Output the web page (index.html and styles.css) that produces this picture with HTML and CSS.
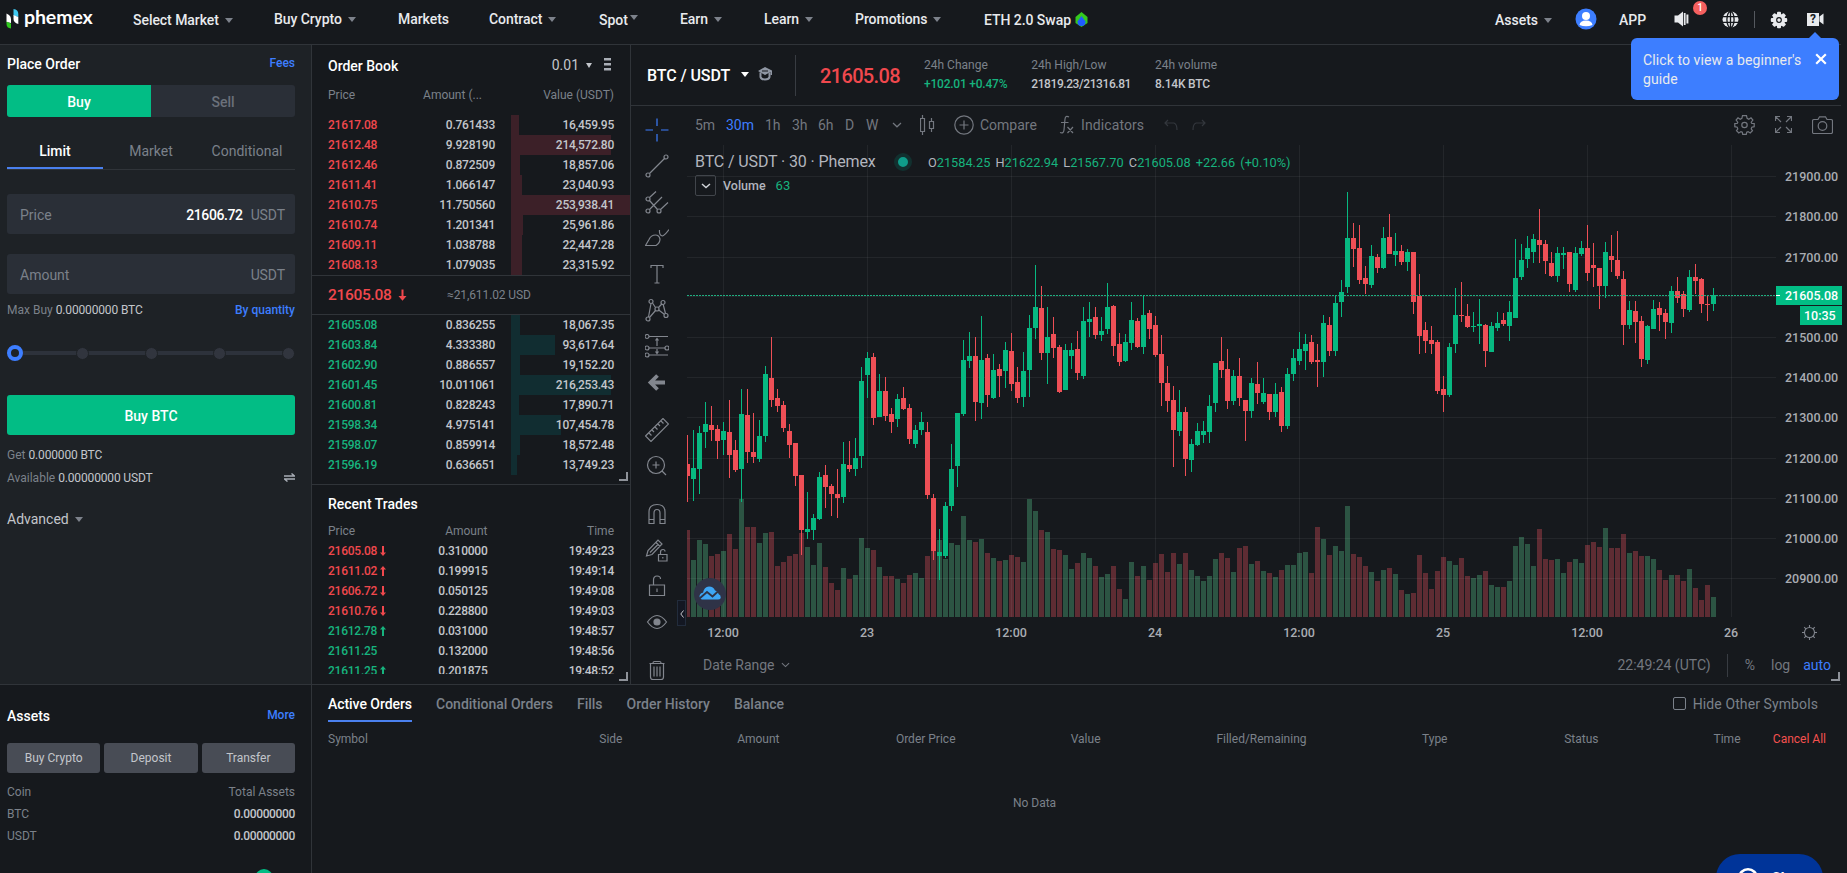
FILE: index.html
```html
<!DOCTYPE html>
<html lang="en">
<head>
    <meta charset="UTF-8">
    <meta name="viewport" content="width=device-width, initial-scale=1.0">
    <title>BTC / USDT | Phemex</title>
    <link rel="stylesheet" href="styles.css">
</head>
<body>
    <header class="topbar">
        <a class="logo">
            <svg width="14" height="22" viewBox="0 0 14 22">
                <path d="M0.5 5.5 L3 7 Q5 8.5 5 11 V15 L0.5 14Z" fill="#fff"/>
                <path d="M0.5 13.5 L5 15.5 V20.5 Q0.5 20 0.5 16Z" fill="#2fc71e"/>
                <path d="M7.5 1 Q12.3 1.5 12.3 6 V9 L7.5 7.5Z" fill="#3fc8f0"/>
                <path d="M7.5 7 L12.3 9 V16 Q7.5 14.5 7.5 11Z" fill="#fff"/>
            </svg>
            <span>phemex</span>
        </a>
        <nav class="nav">
            <a class="low">Select Market<i class="caret"></i></a>
            <a>Buy Crypto<i class="caret"></i></a>
            <a>Markets</a>
            <a>Contract<i class="caret"></i></a>
            <a class="low">Spot<i class="caret raised"></i></a>
            <a>Earn<i class="caret"></i></a>
            <a>Learn<i class="caret"></i></a>
            <a>Promotions<i class="caret"></i></a>
            <a class="low">ETH 2.0 Swap
                <svg width="13" height="15" viewBox="0 0 13 15"><path d="M6.5 0 L12.5 5 V11 L6.5 15 L0.5 11 V5Z" fill="#35c91e"/><path d="M6.5 4 L10.5 9.5 Q10.5 14 6.5 14 Q2.5 14 2.5 9.5Z" fill="#1f5bff"/></svg>
            </a>
        </nav>
        <div class="tools">
            <a class="low">Assets<i class="caret"></i></a>
            <svg class="avatar" width="22" height="22" viewBox="0 0 22 22"><circle cx="11" cy="11" r="10.5" fill="#3d7eff"/><circle cx="11" cy="8" r="4" fill="#fff"/><path d="M4.5 17 Q5 12.5 11 12.5 Q17 12.5 17.5 17 Q11 19.5 4.5 17Z" fill="#fff"/></svg>
            <a class="app-link low">APP</a>
            <span class="speaker">
                <svg width="15" height="18" viewBox="0 0 15 18" fill="#e8eaed"><path d="M0.5 5.5 H4 L9 1.5 V16.5 L4 12.5 H0.5Z"/><path d="M9.8 3 H11.6 V15 H9.8Z M12.4 4.5 H14.4 V13.5 H12.4Z"/></svg>
                <b class="badge">1</b>
            </span>
            <svg class="globe" width="17" height="17" viewBox="0 0 17 17"><circle cx="8.5" cy="8.5" r="8" fill="#e8eaed"/><g fill="none" stroke="#16191d" stroke-width="1.3"><ellipse cx="8.5" cy="8.5" rx="3.6" ry="8"/><path d="M8.5 0 V17 M0 5.7 H17 M0 11.3 H17"/></g></svg>
            <span class="sep"></span>
            <svg class="gear" width="18" height="18" viewBox="-9 -9 18 18"><g fill="#e8eaed"><circle r="6.3"/><rect x="-2" y="-8.2" width="4" height="16.4" rx="1"/><rect x="-2" y="-8.2" width="4" height="16.4" rx="1" transform="rotate(45)"/><rect x="-2" y="-8.2" width="4" height="16.4" rx="1" transform="rotate(90)"/><rect x="-2" y="-8.2" width="4" height="16.4" rx="1" transform="rotate(135)"/></g><circle r="2.3" fill="#e8eaed" stroke="#16191d" stroke-width="1.2"/></svg>
            <span class="guide"><b>?</b><svg width="5" height="12" viewBox="0 0 5 12"><path d="M0.5 3.5 L4.5 0.5 V11.5 L0.5 8.5Z" fill="#e8eaed"/></svg></span>
        </div>
        <div class="tip">
            <p>Click to view a beginner's guide</p>
            <svg width="12" height="12" viewBox="0 0 12 12"><path d="M1.2 1.2 L10.8 10.8 M10.8 1.2 L1.2 10.8" stroke="#fff" stroke-width="2.2"/></svg>
        </div>
    </header>

    <main class="layout">
        <section class="order-form">
            <div class="form-head"><h2>Place Order</h2><a class="link">Fees</a></div>
            <div class="side-switch"><button class="active">Buy</button><button>Sell</button></div>
            <div class="type-tabs"><a class="active">Limit</a><a>Market</a><a>Conditional</a></div>
            <div class="field"><span>Price</span><b>21606.72</b><em>USDT</em></div>
            <div class="field"><span>Amount</span><em>USDT</em></div>
            <div class="line max-buy"><span>Max Buy <b>0.00000000 BTC</b></span><a class="link">By quantity</a></div>
            <div class="slider"><i class="handle"></i><i></i><i></i><i></i><i></i></div>
            <button class="submit">Buy BTC</button>
            <div class="line get"><span>Get <b>0.000000 BTC</b></span></div>
            <div class="line"><span>Available <b>0.00000000 USDT</b></span>
                <svg width="11" height="9" viewBox="0 0 11 9" fill="none" stroke="#a9aeb6" stroke-width="1.4"><path d="M0 3 H10.5 L7.5 0.5 M11 6 H0.5 L3.5 8.5"/></svg>
            </div>
            <div class="advanced">Advanced<i class="caret"></i></div>
        </section>

        <section class="book">
            <div class="book-head"><h2>Order Book</h2><span class="tick">0.01<i class="caret"></i></span>
                <svg width="7" height="14" viewBox="0 0 7 14" fill="#a9aeb6"><path d="M0 1h7v2.4H0z M0 6h7v2.4H0z M0 11h7v2.4H0z"/></svg>
            </div>
            <div class="cols cols-head"><span>Price</span><span>Amount (...</span><span>Value (USDT)</span></div>
            <div id="asks" class="asks"></div>
            <div class="last"><b>21605.08</b><svg width="9" height="12" viewBox="0 0 9 12" fill="none" stroke="#f0484d" stroke-width="2"><path d="M4.5 0.5 V10"/><path d="M0.5 7 H8.5 L4.5 11.8Z" fill="#f0484d" stroke="none"/></svg><span>≈21,611.02 USD</span></div>
            <div id="bids" class="bids"></div>
        </section>

        <section class="trades">
            <h2>Recent Trades</h2>
            <div class="cols cols-head"><span>Price</span><span>Amount</span><span>Time</span></div>
            <div id="trades" class="trade-list"></div>
        </section>

        <section class="market">
            <div class="ticker">
                <h1>BTC / USDT</h1><i class="caret"></i>
                <svg class="cap" width="16" height="14" viewBox="0 0 16 14"><path d="M8 0 L15 3.5 V8 H13.5 V5 L8 8 L1 4Z" fill="#8f96a3"/><path d="M3.5 5.5 V10 Q4 12.5 8 12.5 Q12 12.5 12.5 10 V5.5" fill="none" stroke="#8f96a3" stroke-width="2"/><path d="M5 4 H11" stroke="#16191d"/></svg>
                <span class="sep"></span>
                <strong>21605.08</strong>
                <dl><dt>24h Change</dt><dd class="up">+102.01 +0.47%</dd></dl>
                <dl><dt>24h High/Low</dt><dd>21819.23/21316.81</dd></dl>
                <dl><dt>24h volume</dt><dd class="vol">8.14K BTC</dd></dl>
            </div>
            <div class="chart">
                <div class="draw-tools">
                    <svg class="blue" viewBox="0 0 24 24"><path d="M12 0.5 V8 M12 16 V23.5 M0.5 12 H8 M16 12 H23.5"/></svg>
                    <svg viewBox="0 0 24 24"><circle cx="3" cy="21" r="2"/><circle cx="21" cy="3" r="2"/><path d="M4.5 19.5 L19.5 4.5"/></svg>
                    <svg viewBox="0 0 24 24"><circle cx="3" cy="9" r="2"/><circle cx="3" cy="21" r="2"/><circle cx="14" cy="21" r="2"/><path d="M4.5 7.5 L11 1.5 M4.5 19.5 L17 7 M4.5 10.5 L12.5 19.5 M15.5 19.5 L23 12.5"/></svg>
                    <svg viewBox="0 0 24 24"><path d="M0.5 19.5 H11 Q15 17 15 13 Q14 9 10.5 9 Q6 9 4 13.5Z M14.5 4 Q14 9.5 17.5 10 Q20 9 24 3.5"/></svg>
                    <svg viewBox="0 0 24 24"><path d="M6 6 V3.5 H18 V6 M12 3.5 V21 M9.5 21 H14.5"/></svg>
                    <svg viewBox="0 0 24 24"><circle cx="6" cy="3.5" r="2"/><circle cx="18" cy="4.5" r="2"/><circle cx="3" cy="21" r="2"/><circle cx="21" cy="17.5" r="2"/><circle cx="12" cy="11" r="2"/><path d="M6 5.5 L3.5 19 M18.2 6.5 L20.5 15.5 M7.5 5 L10.5 9.5 M13.5 9.5 L16.8 6 M10.5 12.5 L4.5 19.5 M13.7 12 L19.3 16.3"/></svg>
                    <svg viewBox="0 0 24 24"><circle cx="2" cy="2.5" r="2"/><circle cx="2" cy="14" r="2"/><circle cx="2" cy="21" r="2"/><circle cx="22" cy="14" r="2"/><path d="M4 2.5 H23 M4 14 H20 M4 21 H23 M12 5 V12 M12 15 V19 M10.5 6.5 L12 4.5 L13.5 6.5 M10.5 17.5 L12 19.5 L13.5 17.5"/></svg>
                    <svg class="back" viewBox="0 0 24 24"><path d="M12.5 5.5 L5.5 12.5 L12.5 19.5 M6 12.5 H20"/></svg>
                    <svg class="gap-a" viewBox="0 0 24 24"><path d="M0.5 18 L18 0.5 L23.5 6 L6 23.5Z M4 15 L6.5 17.5 M7 12 L9 14 M10 9 L12.5 11.5 M13 6 L15 8 M16 3 L18.5 5.5"/></svg>
                    <svg viewBox="0 0 24 24"><circle cx="11" cy="11" r="8.5"/><path d="M11 7.5 V14.5 M7.5 11 H14.5 M17 17 L21 21"/></svg>
                    <svg class="gap-b" viewBox="0 0 24 24"><path d="M4 21.5 V10 Q4 2.5 12 2.5 Q20 2.5 20 10 V21.5 H15 V11 Q15 7.5 12 7.5 Q9 7.5 9 11 V21.5Z M4 17.5 H9 M15 17.5 H20"/></svg>
                    <svg viewBox="0 0 24 24"><path d="M1.5 18 L3 12.5 L13 2 L17 6 L7 16.5Z M11 4.5 L15 8.5 M5 14.5 L13 6.5 M13.5 16.5 H22 V23 H13.5Z M15.5 16.5 V14 Q15.5 11.5 18 11.5 Q20 11.5 20 13.5 M17.8 19 V20.5"/></svg>
                    <svg viewBox="0 0 24 24"><path d="M4.5 11 H19.5 V21.5 H4.5Z M8.5 11 V6 Q8.5 2 12 2 Q15.5 2 15.5 5 M12 14.5 V18"/></svg>
                    <svg viewBox="0 0 24 24"><path d="M2.5 12 Q12 -1 21.5 12 Q12 25 2.5 12Z"/><circle cx="12" cy="12" r="3" class="solid"/></svg>
                    <svg class="gap-c" viewBox="0 0 24 24"><path d="M5.5 6 V19 Q5.5 21.5 8 21.5 H16 Q18.5 21.5 18.5 19 V6 M4.5 5.5 H19.5 M8 5 Q8 3.5 9.5 3.5 H14.5 Q16 3.5 16 5 M9 8.5 V18.5 M12 8.5 V18.5 M15 8.5 V18.5"/></svg>
                </div>
                <div class="pane">
                    <div class="chart-bar">
                        <div class="periods"><a>5m</a><a class="active">30m</a><a>1h</a><a>3h</a><a>6h</a><a>D</a><a>W</a></div>
                        <svg class="chev" width="10" height="6" viewBox="0 0 10 6"><path d="M1 1 L5 4.8 L9 1"/></svg>
                        <svg class="style" width="15" height="22" viewBox="0 0 15 22"><path d="M0.5 4.5 H4.5 V17.5 H0.5Z M2.5 1 V4.5 M2.5 17.5 V21 M9.5 7.5 H13.5 V14.5 H9.5Z M11.5 4 V7.5 M11.5 14.5 V18"/></svg>
                        <svg class="plus" width="20" height="20" viewBox="0 0 20 20"><circle cx="10" cy="10" r="9.2"/><path d="M10 5.5 V14.5 M5.5 10 H14.5"/></svg>
                        <a class="compare">Compare</a>
                        <svg class="fx" width="16" height="20" viewBox="0 0 16 20"><path d="M10 2 Q6.5 0 6 4 L5 15 Q4.5 19 1 17.5 M2 7.5 H9.5 M8.5 12 L14 18 M14 12 L8.5 18"/></svg>
                        <a class="indicators">Indicators</a>
                        <svg class="history" width="14" height="12" viewBox="0 0 14 12"><path d="M1 4 H10 Q13 5 13 11 M4 1 L1 4 L4 7"/></svg>
                        <svg class="history" width="14" height="12" viewBox="0 0 14 12"><path d="M13 4 H4 Q1 5 1 11 M10 1 L13 4 L10 7"/></svg>
                        <span class="grow"></span>
                        <svg class="r1" width="21" height="20" viewBox="-10.5 -10 21 20"><path d="M-2 -9.3 H2 L2.6 -6.6 L4.3 -5.8 L6.5 -7.2 L8.4 -5 L6.7 -2.8 L7.3 -1.6 L9.7 -1.5 V1.7 L7.3 2.2 L6.7 3.8 L8 5.7 L5.7 8 L3.6 6.6 L2.2 7.2 L1.8 9.3 H-1.8 L-2.2 7.2 L-3.6 6.6 L-5.7 8 L-8 5.7 L-6.7 3.8 L-7.3 2.2 L-9.7 1.7 V-1.5 L-7.3 -1.6 L-6.7 -2.8 L-8.4 -5 L-6.5 -7.2 L-4.3 -5.8 L-2.6 -6.6Z"/><circle r="2.7"/></svg>
                        <svg class="r2" width="17" height="17" viewBox="0 0 17 17"><path d="M0.5 5 V0.5 H5 M12 0.5 H16.5 V5 M16.5 12 V16.5 H12 M5 16.5 H0.5 V12 M1 1 L6 6 M16 1 L11 6 M16 16 L11 11 M1 16 L6 11"/></svg>
                        <svg class="r3" width="21" height="18" viewBox="0 0 21 18"><path d="M2 3.5 H6 L7.5 0.8 H13.5 L15 3.5 H19 Q20.5 3.5 20.5 5 V16 Q20.5 17.5 19 17.5 H2 Q0.5 17.5 0.5 16 V5 Q0.5 3.5 2 3.5Z"/><circle cx="10.5" cy="10" r="4.3"/></svg>
                    </div>
                    <div class="plot">
                        <svg id="plot" width="1155" height="503" viewBox="687 145 1155 503"></svg>
                        <div class="legend">
                            <div class="legend-main"><span class="pair">BTC / USDT · 30 · Phemex</span><i class="live"></i>
                                <span class="ohlc">O<b>21584.25</b> H<b>21622.94</b> L<b>21567.70</b> C<b>21605.08</b> <b>+22.66 (+0.10%)</b></span>
                            </div>
                            <div class="legend-vol"><span class="fold"><svg width="10" height="6" viewBox="0 0 10 6"><path d="M1 1 L5 4.5 L9 1" fill="none" stroke="#d0d3d8" stroke-width="1.5"/></svg></span><span>Volume</span><b>63</b></div>
                        </div>
                        <svg class="cloud" width="32" height="32" viewBox="0 0 32 32"><circle cx="16" cy="16" r="16" fill="#2f3347"/><path d="M8 21.5 Q5.5 21 5.5 18 Q6 15 9 14.8 Q10 9 15 8.5 Q19.5 8.5 21 12.5 Q24 13 24.5 16 Q27 17 26.8 20 Q26 21.5 24 21.5Z" fill="#3ea6f5"/><path d="M5.5 20.5 L13 14 L18.5 18.5 L25 12.5" fill="none" stroke="#2f3347" stroke-width="1.8"/></svg>
                        <span class="collapse"><svg width="4" height="8" viewBox="0 0 4 8"><path d="M3.5 0.5 L0.8 4 L3.5 7.5" fill="none" stroke="#c4c7cc"/></svg></span>
                    </div>
                    <div class="chart-foot">
                        <a>Date Range</a><svg class="chev" width="9" height="6" viewBox="0 0 10 6"><path d="M1 1 L5 4.8 L9 1"/></svg>
                        <span class="grow"></span>
                        <span>22:49:24 (UTC)</span><span class="sep"></span><a class="pct">%</a><a class="log">log</a><a class="auto">auto</a>
                    </div>
                </div>
            </div>
        </section>

        <section class="assets">
            <div class="form-head"><h2>Assets</h2><a class="link">More</a></div>
            <div class="asset-actions"><button>Buy Crypto</button><button>Deposit</button><button>Transfer</button></div>
            <div class="line"><span>Coin</span><span>Total Assets</span></div>
            <div class="line"><span>BTC</span><b>0.00000000</b></div>
            <div class="line"><span>USDT</span><b>0.00000000</b></div>
            <i class="status-dot"></i>
        </section>

        <section class="orders">
            <div class="order-tabs"><a class="active">Active Orders</a><a>Conditional Orders</a><a>Fills</a><a>Order History</a><a>Balance</a>
                <label><i></i>Hide Other Symbols</label>
            </div>
            <div class="order-cols"><span>Symbol</span><span>Side</span><span>Amount</span><span>Order Price</span><span>Value</span><span>Filled/Remaining</span><span>Type</span><span>Status</span><span>Time</span><a>Cancel All</a></div>
            <p class="empty">No Data</p>
            <button class="chat"><svg width="22" height="22" viewBox="0 0 22 22"><circle cx="11" cy="11" r="8.8" fill="none" stroke="#fff" stroke-width="2.6"/></svg>Chat</button>
        </section>
    </main>
    <script src="script.js"></script>
</body>
</html>
```
FILE: styles.css
```css
* {
    box-sizing: border-box;
}

body {
    margin: 0;
    width: 1847px;
    height: 873px;
    overflow: hidden;
    background-color: #16191d;
    color: #c3c6cb;
    font-family: Roboto, "Liberation Sans", sans-serif;
    font-size: 12px;
    line-height: 20px;
}

h1, h2, p, dl, dd {
    margin: 0;
}

h2 {
    color: #fff;
    font-size: 14px;
    font-weight: 500;
}

b {
    font-weight: 500;
}

svg {
    display: block;
    flex: none;
}

button {
    border: none;
    padding: 0;
    font-family: inherit;
    cursor: pointer;
}

.link {
    color: #3d7eff;
    font-weight: 500;
}

.grow {
    flex: 1;
}

.caret {
    display: inline-block;
    border: 4px solid transparent;
    border-top: 5px solid #7d828b;
    border-bottom: none;
    margin-left: 6px;
    vertical-align: 2px;
}

.sep {
    width: 1px;
    background-color: #383c42;
}

/* Top bar */
.topbar {
    position: relative;
    display: flex;
    height: 45px;
    width: 1841px;
    border-bottom: 1px solid #303439;
    color: #e8eaed;
    font-size: 14px;
    font-weight: 500;
    line-height: 38px;
}

.logo {
    display: flex;
    width: 133px;
    padding: 8px 0 0 6px;
}

.logo span {
    margin-left: 4px;
    color: #fff;
    font-family: Lato, sans-serif;
    font-size: 19.5px;
    font-weight: 700;
    line-height: 18px;
    letter-spacing: -0.1px;
}

.nav {
    display: grid;
    grid-template-columns: 141px 124px 91px 110px 81px 84px 91px 129px 120px;
    width: 1362px;
}

.nav a {
    white-space: nowrap;
    letter-spacing: -0.05px;
}

.low {
    padding-top: 1px;
}

.nav svg {
    display: inline-block;
    margin-left: 1px;
    vertical-align: -2px;
}

.caret.raised {
    margin-left: 2px;
    vertical-align: 5px;
}

.tools {
    display: flex;
    flex: 1;
    white-space: nowrap;
}

.avatar {
    margin: 8px 0 0 23px;
}

.app-link {
    margin-left: 22px;
    width: 56px;
}

.speaker {
    position: relative;
    padding-top: 10px;
    width: 48px;
    margin-left: -1px;
}

.badge {
    position: absolute;
    left: 19px;
    top: 1px;
    width: 14px;
    height: 14px;
    border-radius: 7px;
    background-color: #f5605f;
    color: #fff;
    font-size: 10px;
    line-height: 14px;
    text-align: center;
}

.globe {
    margin-top: 11px;
}

.tools .sep {
    height: 17px;
    margin: 11px 15px 0 15px;
    background-color: #55595f;
}

.gear {
    margin-top: 11px;
}

.guide {
    display: flex;
    margin: 13px 0 0 19px;
}

.guide b {
    width: 12px;
    height: 13px;
    background-color: #e8eaed;
    color: #16191d;
    font-size: 12px;
    font-weight: 700;
    line-height: 13px;
    text-align: center;
}

.tip {
    position: absolute;
    left: 1631px;
    top: 38px;
    z-index: 2;
    display: flex;
    width: 208px;
    height: 62px;
    padding: 13px 12px 12px;
    border-radius: 6px;
    background-color: #3d7eff;
    line-height: 19px;
    font-weight: 400;
}

.tip p {
    width: 172px;
    letter-spacing: 0.1px;
}

.tip svg {
    margin-top: 2px;
}

.tip::before {
    content: "";
    position: absolute;
    left: 178px;
    top: -6px;
    border: 6px solid transparent;
    border-top: none;
    border-bottom-color: #3d7eff;
}

/* Page grid */
.layout {
    display: grid;
    grid-template-columns: 312px 319px 1210px;
    grid-template-rows: 440px 200px 188px;
    width: 1841px;
}

.order-form {
    grid-row: 1 / 3;
    padding: 9px 16px 0 7px;
    border-right: 1px solid #303439;
    border-bottom: 1px solid #303439;
    background-color: #1e2226;
}

.form-head {
    display: flex;
    justify-content: space-between;
}

.form-head .link {
    margin-top: -1px;
}

.side-switch {
    display: grid;
    grid-template-columns: 1fr 1fr;
    height: 32px;
    margin-top: 11px;
    border-radius: 3px;
    background-color: #2a2f37;
    overflow: hidden;
}

.side-switch button {
    background: none;
    color: #6b717b;
    font-size: 14px;
    font-weight: 500;
    line-height: 34px;
}

.side-switch .active {
    background-color: #02bd85;
    color: #fff;
}

.type-tabs {
    display: grid;
    grid-template-columns: 1fr 1fr 1fr;
    height: 36px;
    margin-top: 17px;
    border-bottom: 1px solid #303439;
    color: #7b818a;
    font-size: 14px;
    line-height: 34px;
    text-align: center;
}

.type-tabs .active {
    height: 35px;
    border-bottom: 2px solid #4a80ee;
    color: #fff;
    font-weight: 500;
}

.field {
    display: flex;
    height: 40px;
    margin-top: 20px;
    padding: 0 10px 0 13px;
    border-radius: 3px;
    background-color: #2a2f37;
    color: #7b818a;
    font-size: 14px;
    line-height: 42px;
}

.type-tabs + .field {
    margin-top: 24px;
}

.field span {
    flex: 1;
}

.field b {
    margin-right: 8px;
    color: #fff;
    letter-spacing: -0.4px;
}

.field em {
    font-style: normal;
    letter-spacing: -0.1px;
}

.line {
    display: flex;
    justify-content: space-between;
    align-items: center;
    height: 23px;
    color: #7b818a;
}

.line b {
    color: #c3c6cb;
}

.order-form .line b {
    font-weight: 400;
    letter-spacing: -0.15px;
}

.max-buy {
    margin-top: 4px;
}

.slider {
    display: flex;
    justify-content: space-between;
    align-items: center;
    height: 16px;
    margin: 24px 0 34px;
    background: linear-gradient(#2d323b, #2d323b) center / 272px 4px no-repeat;
}

.slider i {
    width: 13px;
    height: 13px;
    border-radius: 7px;
    border: 1px solid #1e2226;
    background-color: #31353e;
}

.slider .handle {
    width: 16px;
    height: 16px;
    margin-right: -3px;
    border: 4px solid #3d7eff;
    border-radius: 8px;
    background-color: #1e2226;
}

.submit {
    display: block;
    width: 288px;
    height: 40px;
    border-radius: 3px;
    background-color: #02bd85;
    color: #fff;
    font-size: 14px;
    font-weight: 500;
    line-height: 42px;
}

.get {
    margin-top: 8px;
}

.advanced {
    margin-top: 20px;
    font-size: 14px;
}

/* Order book and trades */
.book {
    position: relative;
    border-right: 1px solid #303439;
    border-bottom: 1px solid #303439;
}

.book::after,
.trades::after,
.market::after {
    content: "";
    position: absolute;
    right: 2px;
    bottom: 3px;
    width: 7px;
    height: 7px;
    border-right: 2px solid #8e9299;
    border-bottom: 2px solid #8e9299;
}

.market::after {
    right: 1px;
}

.book-head {
    display: flex;
    height: 40px;
    padding: 11px 19px 0 16px;
}

.tick {
    margin: -1px 12px 0 auto;
    font-size: 14px;
}

.book-head svg {
    margin-top: 1px;
}

.tick .caret {
    border-width: 5px 3px 0;
    border-top-color: #c3c6cb;
    margin-left: 7px;
}

.cols {
    display: grid;
    grid-template-columns: 70px 97px 119px;
    height: 20px;
    padding-left: 16px;
    color: #c3c6cb;
    font-weight: 500;
    line-height: 20px;
    text-align: right;
}

.cols > :first-child {
    text-align: left;
}

.cols-head {
    color: #7b818a;
    font-weight: 400;
    grid-template-columns: 70px 84px 132px;
}

.book .cols-head {
    height: 30px;
}

.red {
    color: #f0484d;
}

.green,
.up {
    color: #17b37e;
}

.level {
    background-repeat: no-repeat;
    background-position: 199px 0;
}

.asks .level {
    background-image: linear-gradient(#3c2028, #3c2028);
}

.bids .level {
    background-image: linear-gradient(#112d31, #112d31);
}

.cols i {
    font-style: normal;
    letter-spacing: -0.24px;
}

.last {
    display: flex;
    align-items: center;
    height: 40px;
    padding-left: 16px;
    border-top: 1px solid #303439;
    border-bottom: 1px solid #303439;
    color: #7b818a;
}

.last b {
    color: #f0484d;
    font-size: 15.5px;
    letter-spacing: -0.3px;
    width: 70px;
}

.last span {
    margin-left: 40px;
    letter-spacing: -0.1px;
}

.trades {
    position: relative;
    border-right: 1px solid #303439;
    border-bottom: 1px solid #303439;
}

.trades h2 {
    padding: 9px 16px 7px;
}

.trades .cols {
    grid-template-columns: 70px 89.5px 126.5px;
}

.trade-list {
    height: 133px;
    overflow: hidden;
}

.trade-list .cols > :first-child {
    display: flex;
    align-items: center;
}

.trade-list svg {
    margin-left: 3px;
}

/* Chart */
.market {
    position: relative;
    grid-row: 1 / 3;
    grid-column: 3;
    border-bottom: 1px solid #303439;
}

.ticker {
    display: flex;
    height: 61px;
    padding-left: 16px;
    border-bottom: 1px solid #303439;
    white-space: nowrap;
}

.ticker h1 {
    width: 84px;
    color: #fff;
    font-size: 16px;
    font-weight: 500;
    letter-spacing: -0.1px;
    line-height: 61px;
}

.ticker .caret {
    margin: 27px 0 0 10px;
    height: 0;
    border-top-color: #fff;
}

.cap {
    margin: 22px 0 0 8px;
}

.ticker .sep {
    height: 41px;
    margin: 10px 24px 0 22px;
}

.ticker strong {
    width: 104px;
    color: #f0484d;
    font-size: 20px;
    font-weight: 500;
    letter-spacing: -0.65px;
    line-height: 62px;
}

.ticker dl {
    padding-top: 10px;
    margin-right: 24px;
}

.ticker dt {
    color: #7b818a;
    line-height: 20px;
}

.ticker dd {
    line-height: 19px;
    font-weight: 500;
    letter-spacing: -0.42px;
}

.ticker .up,
.ticker .vol {
    letter-spacing: -0.22px;
}

.chart {
    display: flex;
    height: 578px;
    color: #73777f;
}

.draw-tools {
    flex: none;
    width: 56px;
    padding: 12px 0 0 14px;
}

.draw-tools svg {
    width: 24px;
    height: 24px;
    margin-bottom: 12px;
    fill: none;
    stroke: #82868e;
    stroke-width: 1.2;
}

.draw-tools .blue {
    stroke: #3d7eff;
}

.draw-tools .solid {
    fill: #82868e;
}

.draw-tools .back {
    stroke-width: 3.8;
}

.draw-tools .gap-a,
.draw-tools .gap-b,
.draw-tools .gap-c {
    margin-top: 24px;
}

.pane {
    flex: none;
    width: 1155px;
}

.chart-bar {
    display: flex;
    align-items: center;
    height: 39px;
    padding: 0 0 2px 8px;
    font-size: 14px;
}

.chart-bar svg,
.chev {
    fill: none;
    stroke: #73777f;
    stroke-width: 1.2;
}

.periods {
    display: grid;
    grid-template-columns: 31px 39px 27px 26px 27px 21px 26px;
}

.periods .active,
.auto {
    color: #3d7eff;
}

.chart-bar .style {
    margin-left: 18px;
}

.chart-bar .plus {
    margin-left: 19px;
}

.compare {
    width: 85px;
    padding-left: 6px;
}

.indicators {
    width: 89px;
    padding-left: 6px;
    letter-spacing: 0.1px;
}

.chart-bar .history {
    margin-right: 14px;
    stroke: #33373d;
}

.chart-bar .r1 {
    margin-right: 20px;
}

.chart-bar .r2 {
    margin-right: 20px;
}

.chart-bar .r3 {
    margin-right: 9px;
}

.plot {
    position: relative;
    height: 503px;
}

.plot text {
    fill: #a9acb2;
    font-size: 12.5px;
    font-weight: 500;
}

.plot .tag-text {
    fill: #fff;
}

.legend {
    position: absolute;
    left: 8px;
    top: 6px;
}

.legend-main {
    display: flex;
    align-items: center;
    height: 22px;
    color: #b2b5be;
}

.pair {
    width: 199px;
    font-size: 16px;
    letter-spacing: -0.12px;
}

.live {
    width: 18px;
    height: 18px;
    border: 4px solid #12302f;
    border-radius: 9px;
    background-color: #0f9d8a;
}

.ohlc {
    margin-left: 16px;
    padding-top: 1px;
    font-size: 12.75px;
    word-spacing: 2px;
}

.ohlc b,
.legend-vol b {
    color: #17b37e;
    font-weight: 400;
}

.legend-vol {
    display: flex;
    align-items: center;
    height: 25px;
    color: #b2b5be;
    font-size: 12.5px;
    font-weight: 500;
}

.legend-vol b {
    margin-left: 10px;
    font-size: 13px;
}

.fold {
    display: flex;
    align-items: center;
    justify-content: center;
    width: 21px;
    height: 21px;
    margin-right: 7px;
    border: 1px solid #41454b;
    border-radius: 2px;
}

.cloud {
    position: absolute;
    left: 7px;
    top: 433px;
}

.collapse {
    position: absolute;
    left: -10px;
    top: 455px;
    width: 9px;
    height: 26px;
    padding: 9px 0 0 2px;
    border: 1px solid #222c3c;
    background-color: #131722;
}

.chart-foot {
    display: flex;
    align-items: center;
    height: 34px;
    padding: 0 11px 0 16px;
    font-size: 14px;
}

.chart-foot .chev {
    margin-left: 6px;
}

.chart-foot .sep {
    height: 23px;
    margin: 0 17px 0 16px;
}

.log {
    margin: 0 13px 0 16px;
}

/* Bottom panels */
.assets {
    position: relative;
    padding: 21px 16px 0 7px;
    border-right: 1px solid #303439;
}

.asset-actions {
    display: grid;
    grid-template-columns: 1fr 1fr 1fr;
    gap: 4px;
    margin: 17px 0 8px;
}

.asset-actions button {
    height: 30px;
    border-radius: 3px;
    background-color: #484c55;
    color: #c3c6cb;
    font-size: 12px;
}

.assets .line {
    height: 22px;
}

.assets .line b {
    letter-spacing: -0.35px;
}

.status-dot {
    position: absolute;
    left: 255px;
    top: 184px;
    width: 18px;
    height: 18px;
    border-radius: 9px;
    background-color: #02bd85;
}

.orders {
    position: relative;
    grid-column: 2 / 4;
    padding: 0 15px 0 16px;
}

.order-tabs {
    display: flex;
    gap: 24px;
    height: 37px;
    color: #7b818a;
    font-size: 14px;
    font-weight: 500;
    line-height: 38px;
}

.order-tabs .active {
    border-bottom: 2px solid #4a80ee;
    color: #fff;
    letter-spacing: -0.05px;
}

.order-tabs label {
    display: flex;
    align-items: center;
    margin: 0 8px 0 auto;
    font-weight: 400;
    letter-spacing: 0.1px;
}

.order-tabs label i {
    width: 13px;
    height: 13px;
    margin-right: 7px;
    border: 1px solid #7b818a;
    border-radius: 2px;
}

.order-cols {
    display: grid;
    grid-template-columns: 80px 214.5px 157px 176px 145px 206px 141px 151px 142px 85.5px;
    margin-top: 7px;
    color: #7b818a;
    text-align: right;
}

.order-cols :first-child {
    text-align: left;
}

.order-cols a {
    color: #f5514f;
}

.empty {
    margin-top: 44px;
    padding-right: 85px;
    color: #7b818a;
    text-align: center;
}

.chat {
    position: absolute;
    left: 1404px;
    top: 169px;
    display: flex;
    align-items: center;
    width: 107px;
    height: 48px;
    padding-left: 21px;
    border-radius: 24px;
    background-color: #003499;
    color: #fff;
    font-size: 15px;
    font-weight: 700;
}

.chat svg {
    margin-right: 12px;
}
```
FILE: script.js
```js
// price, amount, value, depth bar width
var asks = [
    ["21617.08", "0.761433", "16,459.95", 8],
    ["21612.48", "9.928190", "214,572.80", 100],
    ["21612.46", "0.872509", "18,857.06", 9],
    ["21611.41", "1.066147", "23,040.93", 11],
    ["21610.75", "11.750560", "253,938.41", 119],
    ["21610.74", "1.201341", "25,961.86", 12],
    ["21609.11", "1.038788", "22,447.28", 11],
    ["21608.13", "1.079035", "23,315.92", 11]
];
var bids = [
    ["21605.08", "0.836255", "18,067.35", 9],
    ["21603.84", "4.333380", "93,617.64", 44],
    ["21602.90", "0.886557", "19,152.20", 9],
    ["21601.45", "10.011061", "216,253.43", 100],
    ["21600.81", "0.828243", "17,890.71", 8],
    ["21598.34", "4.975141", "107,454.78", 50],
    ["21598.07", "0.859914", "18,572.48", 9],
    ["21596.19", "0.636651", "13,749.23", 6]
];
var trades = [
    ["21605.08", "red", "down", "0.310000", "19:49:23"],
    ["21611.02", "red", "up", "0.199915", "19:49:14"],
    ["21606.72", "red", "down", "0.050125", "19:49:08"],
    ["21610.76", "red", "down", "0.228800", "19:49:03"],
    ["21612.78", "green", "up", "0.031000", "19:48:57"],
    ["21611.25", "green", "", "0.132000", "19:48:56"],
    ["21611.25", "green", "up", "0.201875", "19:48:52"]
];
var arrows = {
    up: '<svg width="6" height="10" viewBox="0 0 6 10"><path d="M3 0 L6 3.5 H4 V10 H2 V3.5 H0Z" fill="currentColor"/></svg>',
    down: '<svg width="6" height="10" viewBox="0 0 6 10"><path d="M3 10 L6 6.5 H4 V0 H2 V6.5 H0Z" fill="currentColor"/></svg>',
    "": ""
};

function showLevels(id, rows, color) {
    document.getElementById(id).innerHTML = rows.map(function (r) {
        return `<div class="cols level" style="background-size: ${r[3]}px 20px"><i class="${color}">${r[0]}</i><i>${r[1]}</i><i>${r[2]}</i></div>`;
    }).join("");
}
showLevels("asks", asks, "red");
showLevels("bids", bids, "green");

document.getElementById("trades").innerHTML = trades.map(function (t) {
    return `<div class="cols"><i class="${t[1]}">${t[0]}${arrows[t[2]]}</i><i>${t[3]}</i><i>${t[4]}</i></div>`;
}).join("");

// up(1)/down(0), high, body top, body bottom, low, volume height
var candles = [
    [0,435,464,476,502,87],[1,430,468,479,501,57],[1,426,433,469,494,77],[1,402,424,432,448,73],
    [0,406,425,430,441,61],[0,425,429,441,459,63],[1,422,431,440,455,66],[0,400,432,455,478,83],
    [0,440,450,470,472,68],[1,389,414,469,502,118],[0,389,415,452,463,90],[0,413,452,457,463,90],
    [1,420,436,459,462,74],[1,366,374,436,442,84],[0,337,378,400,407,85],[0,389,398,406,412,51],
    [0,401,405,428,432,55],[0,424,431,445,458,61],[0,443,443,476,486,63],[0,475,475,530,555,84],
    [1,492,529,532,539,70],[1,514,518,530,540,52],[1,472,477,519,520,74],[0,465,475,487,508,50],
    [0,484,486,494,516,34],[0,469,494,498,518,27],[1,442,464,497,503,49],[0,441,465,469,472,38],
    [1,438,458,469,476,42],[1,367,381,456,468,79],[1,352,358,375,398,69],[0,353,357,418,425,67],
    [1,374,391,417,417,50],[0,377,391,416,421,41],[0,408,414,422,433,41],[1,394,399,419,427,38],
    [0,387,398,409,410,34],[0,404,408,439,444,42],[1,425,430,444,448,44],[1,412,422,430,435,39],
    [0,422,432,495,499,61],[0,494,498,551,560,66],[1,529,552,556,580,77],[1,502,506,556,558,58],
    [1,444,469,506,511,74],[1,413,413,466,487,72],[1,340,360,414,416,101],[1,332,356,361,368,77],
    [0,337,356,402,421,75],[1,316,360,403,419,78],[0,354,358,395,407,64],[1,354,370,398,399,59],
    [0,364,369,376,397,56],[1,342,350,371,388,57],[0,333,351,384,391,62],[0,367,382,398,403,60],
    [1,352,371,397,407,55],[1,315,328,370,397,118],[1,265,307,328,339,106],[0,286,308,353,360,87],
    [1,307,337,353,384,85],[0,317,334,348,358,68],[0,345,347,392,393,67],[1,344,350,390,390,62],
    [1,343,350,356,369,48],[0,331,349,373,380,54],[1,307,321,376,379,64],[1,302,319,322,337,59],
    [0,307,317,335,339,51],[1,317,331,335,341,40],[1,283,307,329,334,43],[0,305,306,346,356,51],
    [0,333,344,362,366,28],[1,334,342,361,362,18],[1,302,320,343,350,55],[0,318,321,347,348,41],
    [1,296,315,347,354,51],[0,310,313,329,339,37],[0,316,325,355,357,54],[0,335,354,383,406,63],
    [0,366,383,401,412,45],[0,386,400,430,467,64],[1,390,412,431,436,53],[0,407,412,459,476,64],
    [1,439,444,460,472,47],[1,423,431,445,446,41],[1,421,431,435,443,36],[1,395,406,432,443,41],
    [1,363,363,403,412,58],[0,337,361,370,378,64],[0,349,369,401,409,59],[1,370,376,401,405,45],
    [0,358,376,398,406,69],[0,400,400,411,441,71],[1,378,383,411,418,53],[0,362,384,393,404,56],
    [1,378,393,402,404,46],[0,394,394,412,420,44],[1,383,394,412,417,40],[0,387,392,426,432,47],
    [1,368,374,426,429,52],[1,349,358,374,381,52],[1,332,349,361,365,64],[1,334,344,351,370,65],
    [0,335,342,362,364,44],[0,344,360,362,387,90],[1,315,323,362,377,78],[0,317,325,351,356,62],
    [1,296,303,351,356,71],[1,280,292,302,317,66],[1,192,238,287,293,111],[0,223,238,249,267,63],
    [0,225,248,280,284,60],[0,266,278,284,294,51],[1,245,256,285,288,45],[0,254,257,268,273,36],
    [1,227,238,268,269,47],[0,214,237,254,254,49],[1,233,251,255,266,43],[0,245,251,262,265,27],
    [1,249,252,262,271,23],[0,252,252,302,314,24],[0,274,296,336,354,62],[0,322,330,341,353,44],
    [0,326,340,344,354,28],[0,340,342,391,394,46],[0,376,389,395,412,60],[1,343,347,395,397,56],
    [1,288,315,344,353,52],[0,282,315,316,322,59],[0,304,316,327,328,41],[1,312,326,327,332,39],
    [1,299,324,326,344,42],[0,324,325,351,367,46],[1,322,326,352,352,32],[1,312,323,328,331,30],
    [0,313,320,324,326,30],[1,301,312,326,341,36],[1,239,278,318,318,71],[1,244,260,277,280,80],
    [1,236,248,259,268,73],[1,234,239,252,263,51],[0,209,240,245,263,88],[0,240,244,261,274,58],
    [0,252,263,276,277,57],[1,247,253,276,282,58],[1,247,253,255,269,44],[0,252,252,284,292,55],
    [1,247,253,290,292,58],[1,241,248,254,256,54],[0,225,248,273,281,72],[0,243,265,268,287,75],
    [0,268,268,286,309,70],[1,242,252,286,298,89],[0,235,256,260,272,69],[0,231,260,276,279,69],
    [0,271,279,325,345,83],[1,301,310,325,329,64],[0,301,311,322,343,66],[0,316,321,359,367,61],
    [1,325,326,360,364,61],[1,300,309,329,329,58],[0,302,308,315,331,47],[0,309,313,322,339,37],
    [1,286,291,323,333,42],[0,277,291,298,303,42],[0,291,294,309,317,36],[1,270,277,310,312,48],
    [0,264,277,281,294,29],[0,278,279,304,313,17],[0,296,304,305,321,32],[1,288,295,304,311,20]
];
var prices = [[21900, 176], [21800, 216], [21700, 257], [21600, 296], [21500, 337], [21400, 377],
    [21300, 417], [21200, 458], [21100, 498], [21000, 538], [20900, 578]];
var times = ["12:00", "23", "12:00", "24", "12:00", "25", "12:00", "26"];

function rect(x, y, w, h, fill) {
    return `<rect x="${x}" y="${y}" width="${w}" height="${h}" fill="${fill}"/>`;
}

function drawChart() {
    var out = "";
    // volume
    candles.forEach(function (c, i) {
        var x = 685 + i * 6;
        out += rect(x, 617 - c[5], 5, c[5], c[0] ? "#2c5443" : "#5e2c33");
    });
    // grid and scales
    prices.forEach(function (p) {
        out += rect(687, p[1], 1089, 1, "rgba(255,255,255,0.06)");
        if (p[0] !== 21600) {
            out += `<text x="1785" y="${p[1] + 5}">${p[0]}.00</text>`;
        }
    });
    times.forEach(function (t, i) {
        var x = 723 + i * 144;
        out += rect(x, 145, 1, 472, "rgba(255,255,255,0.06)");
        out += `<text x="${x}" y="637" text-anchor="middle">${t}</text>`;
    });
    // candles
    candles.forEach(function (c, i) {
        var x = 687 + i * 6;
        var fill = c[0] ? "#07b981" : "#ee4f56";
        out += rect(x, c[1], 1, c[4] - c[1], fill);
        out += rect(x - 2, c[2], 5, Math.max(c[3] - c[2], 1), fill);
    });
    // last price
    out += '<path d="M687 295.5 H1776" stroke="#1fae80" stroke-dasharray="2 1"/>';
    out += rect(1776, 286, 66, 19, "#02bd85") + rect(1776, 295, 4, 1, "#fff");
    out += rect(1800, 306, 42, 19, "#02bd85");
    out += '<text class="tag-text" x="1785" y="300">21605.08</text><text class="tag-text" x="1804" y="320">10:35</text>';
    // scale settings
    out += '<g transform="translate(1809.5 632.5)" fill="none" stroke="#82868e" stroke-width="1.1"><circle r="5"/>';
    for (var a = 0; a < 360; a += 45) {
        out += `<path d="M0 -5 V-7.5" transform="rotate(${a})"/>`;
    }
    out += "</g>";
    document.getElementById("plot").innerHTML = out;
}
drawChart();
```
